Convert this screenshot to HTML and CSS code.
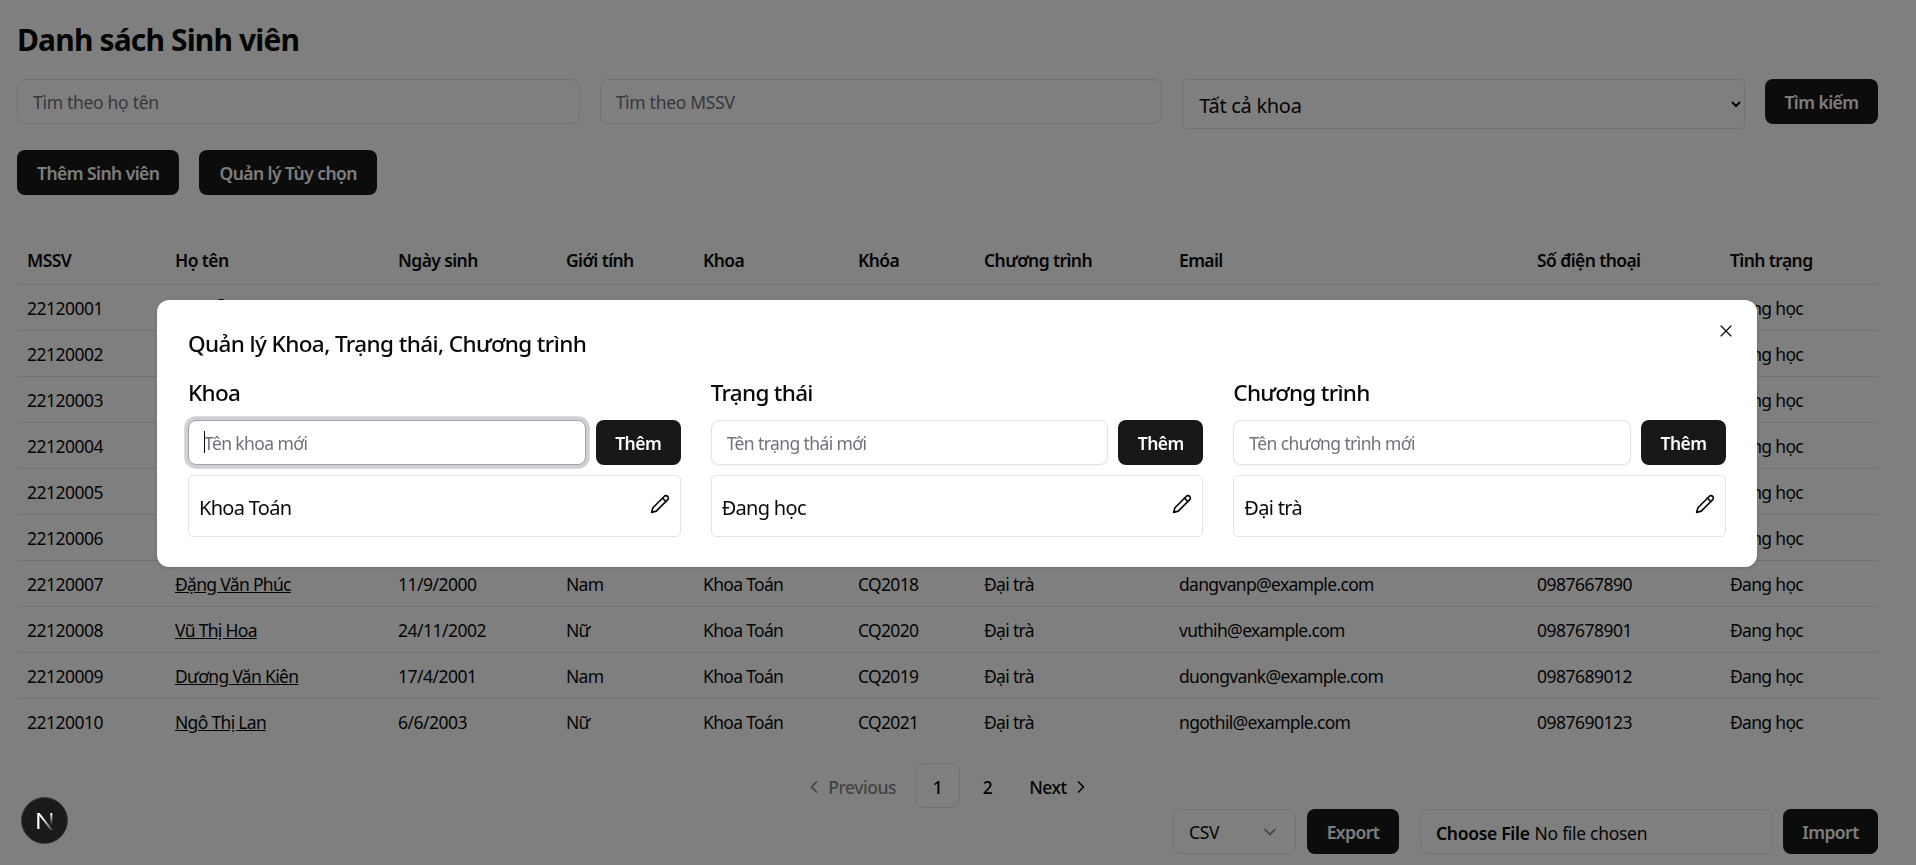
FILE: index.html
```html
<!doctype html>
<html lang="vi">
<head>
    <meta charset="UTF-8">
    <title>Danh sách Sinh viên</title>
    <link rel="stylesheet" href="styles.css">
</head>
<body>
    <div class="page">
        <h1 class="page-title">Danh sách Sinh viên</h1>

        <div class="search-bar">
            <input class="field" type="text" placeholder="Tìm theo họ tên">
            <input class="field" type="text" placeholder="Tìm theo MSSV">
            <select class="field field-select">
                <option>Tất cả khoa</option>
            </select>
            <button class="btn btn-search">Tìm kiếm</button>
        </div>

        <div class="actions">
            <button class="btn">Thêm Sinh viên</button>
            <button class="btn">Quản lý Tùy chọn</button>
        </div>

        <table class="students">
            <colgroup>
                <col class="c-id"><col class="c-name"><col class="c-date"><col class="c-sex"><col class="c-dept">
                <col class="c-year"><col class="c-prog"><col class="c-mail"><col class="c-phone"><col class="c-state">
            </colgroup>
            <thead>
                <tr>
                    <th>MSSV</th><th>Họ tên</th><th>Ngày sinh</th><th>Giới tính</th><th>Khoa</th>
                    <th>Khóa</th><th>Chương trình</th><th>Email</th><th>Số điện thoại</th><th>Tình trạng</th>
                </tr>
            </thead>
            <tbody>
                <!-- rows 1-6 sit behind the dialog -->
                <tr><td>22120001</td><td><a href="#">Nguyễn Văn An</a></td><td></td><td></td><td></td><td></td><td></td><td></td><td></td><td>Đang học</td></tr>
                <tr><td>22120002</td><td></td><td></td><td></td><td></td><td></td><td></td><td></td><td></td><td>Đang học</td></tr>
                <tr><td>22120003</td><td></td><td></td><td></td><td></td><td></td><td></td><td></td><td></td><td>Đang học</td></tr>
                <tr><td>22120004</td><td></td><td></td><td></td><td></td><td></td><td></td><td></td><td></td><td>Đang học</td></tr>
                <tr><td>22120005</td><td></td><td></td><td></td><td></td><td></td><td></td><td></td><td></td><td>Đang học</td></tr>
                <tr><td>22120006</td><td></td><td></td><td></td><td></td><td></td><td></td><td></td><td></td><td>Đang học</td></tr>
                <tr><td>22120007</td><td><a href="#">Đặng Văn Phúc</a></td><td>11/9/2000</td><td>Nam</td><td>Khoa Toán</td><td>CQ2018</td><td>Đại trà</td><td>dangvanp@example.com</td><td>0987667890</td><td>Đang học</td></tr>
                <tr><td>22120008</td><td><a href="#">Vũ Thị Hoa</a></td><td>24/11/2002</td><td>Nữ</td><td>Khoa Toán</td><td>CQ2020</td><td>Đại trà</td><td>vuthih@example.com</td><td>0987678901</td><td>Đang học</td></tr>
                <tr><td>22120009</td><td><a href="#">Dương Văn Kiên</a></td><td>17/4/2001</td><td>Nam</td><td>Khoa Toán</td><td>CQ2019</td><td>Đại trà</td><td>duongvank@example.com</td><td>0987689012</td><td>Đang học</td></tr>
                <tr><td>22120010</td><td><a href="#">Ngô Thị Lan</a></td><td>6/6/2003</td><td>Nữ</td><td>Khoa Toán</td><td>CQ2021</td><td>Đại trà</td><td>ngothil@example.com</td><td>0987690123</td><td>Đang học</td></tr>
            </tbody>
        </table>

        <nav class="pager">
            <a class="pager-link pager-off" href="#">
                <svg class="icon" viewBox="0 0 24 24"><path d="m15 18-6-6 6-6"/></svg>
                Previous
            </a>
            <a class="pager-num pager-on" href="#">1</a>
            <a class="pager-num" href="#">2</a>
            <a class="pager-link" href="#">
                Next
                <svg class="icon" viewBox="0 0 24 24"><path d="m9 18 6-6-6-6"/></svg>
            </a>
        </nav>

        <div class="transfer">
            <div class="format">
                <span>CSV</span>
                <svg class="icon format-arrow" viewBox="0 0 24 24"><path d="m6 9 6 6 6-6"/></svg>
            </div>
            <button class="btn btn-export">Export</button>
            <input class="file" type="file">
            <button class="btn btn-import">Import</button>
        </div>
    </div>

    <div class="overlay">
        <div class="modal">
            <h2 class="modal-title">Quản lý Khoa, Trạng thái, Chương trình</h2>
            <svg class="icon modal-close" viewBox="0 0 24 24"><path d="M18 6 6 18"/><path d="m6 6 12 12"/></svg>
            <div class="modal-grid">
                <section>
                    <h3 class="group-title">Khoa</h3>
                    <div class="add-row">
                        <div class="box-wrap">
                            <input class="box-input" type="text" placeholder="Tên khoa mới" autofocus>
                            <span class="caret"></span>
                        </div>
                        <button class="btn-add">Thêm</button>
                    </div>
                    <div class="item">
                        <span>Khoa Toán</span>
                        <svg class="icon item-edit" viewBox="0 0 24 24"><path d="M17 3a2.85 2.83 0 1 1 4 4L7.5 20.5 2 22l1.5-5.5Z"/><path d="m15 5 4 4"/></svg>
                    </div>
                </section>
                <section>
                    <h3 class="group-title">Trạng thái</h3>
                    <div class="add-row">
                        <div class="box-wrap">
                            <input class="box-input" type="text" placeholder="Tên trạng thái mới">
                        </div>
                        <button class="btn-add">Thêm</button>
                    </div>
                    <div class="item">
                        <span>Đang học</span>
                        <svg class="icon item-edit" viewBox="0 0 24 24"><path d="M17 3a2.85 2.83 0 1 1 4 4L7.5 20.5 2 22l1.5-5.5Z"/><path d="m15 5 4 4"/></svg>
                    </div>
                </section>
                <section>
                    <h3 class="group-title">Chương trình</h3>
                    <div class="add-row">
                        <div class="box-wrap">
                            <input class="box-input" type="text" placeholder="Tên chương trình mới">
                        </div>
                        <button class="btn-add">Thêm</button>
                    </div>
                    <div class="item">
                        <span>Đại trà</span>
                        <svg class="icon item-edit" viewBox="0 0 24 24"><path d="M17 3a2.85 2.83 0 1 1 4 4L7.5 20.5 2 22l1.5-5.5Z"/><path d="m15 5 4 4"/></svg>
                    </div>
                </section>
            </div>
        </div>
    </div>

    <div class="dev-badge">
        <svg viewBox="0 0 24 24" width="32" height="32">
            <defs>
                <linearGradient id="dev-slash" x1="0" y1="0" x2="1" y2="1">
                    <stop offset="0.3" stop-color="#fff"/>
                    <stop offset="1" stop-color="#fff" stop-opacity=".15"/>
                </linearGradient>
                <linearGradient id="dev-bar" x1="0" y1="0" x2="0" y2="1">
                    <stop offset="0" stop-color="#fff"/>
                    <stop offset="1" stop-color="#fff" stop-opacity="0"/>
                </linearGradient>
            </defs>
            <rect class="dev-n" x="6.2" y="6" width="1.6" height="12"/>
            <path fill="url(#dev-slash)" d="M6.2 6h1.8l10 12.8h-2Z"/>
            <rect fill="url(#dev-bar)" x="16" y="6" width="1.5" height="9"/>
        </svg>
    </div>
</body>
</html>
```

FILE: styles.css
```css
*{
    margin: 0;
    padding: 0;
    box-sizing: border-box;
}
html,body{
    height: 100%;
    overflow: hidden;
}
body{
    background: #fff;
    color: #09090b;
    font-family: "Noto Sans", "Open Sans", sans-serif;
    font-size: 17.5px;
    letter-spacing: -0.3px;
}
input,select,button{
    font: inherit;
    letter-spacing: inherit;
    color: inherit;
}
.page{
    padding: 20px 38px 0 17px;
}
.page-title{
    font-size: 30px;
    line-height: 40px;
    font-weight: 700;
    letter-spacing: -0.85px;
    margin-bottom: 19px;
}

.search-bar{
    display: grid;
    grid-template-columns: 1fr 1fr 1fr 113px;
    align-items: start;
    gap: 20px;
}
.field{
    min-width: 0;
    height: 45px;
    padding: 0 15px;
    border: 1px solid #e4e4e7;
    border-radius: 8px;
    background: #fff;
    outline: none;
}
.field::placeholder,.box-input::placeholder{
    color: #71717a;
}
.field-select{
    height: 50px;
    padding: 3px 4px 0 12px;
    font-size: 20px;
    border-radius: 5px;
}
.btn{
    height: 45px;
    padding: 0 20px;
    border: none;
    border-radius: 8px;
    background: #18181b;
    color: #fafafa;
    font-weight: 600;
    letter-spacing: -0.55px;
}
.btn-search{
    padding: 0;
}
.actions{
    display: flex;
    gap: 20px;
    margin-top: 21px;
    margin-bottom: 39px;
}

.students{
    width: 100%;
    table-layout: fixed;
    border-collapse: collapse;
}
.c-id{width: 148px;}
.c-name{width: 223px;}
.c-date{width: 168px;}
.c-sex{width: 137px;}
.c-dept{width: 155px;}
.c-year{width: 126px;}
.c-prog{width: 195px;}
.c-mail{width: 358px;}
.c-phone{width: 193px;}
.students th{
    height: 50px;
    padding: 2px 10px 0;
    text-align: left;
    font-weight: 600;
    letter-spacing: -0.6px;
    border-bottom: 1px solid #e4e4e7;
}
.students td{
    height: 46px;
    padding: 2px 10px 0;
    letter-spacing: -0.68px;
    border-bottom: 1px solid #e4e4e7;
    white-space: nowrap;
}
.students td:nth-child(1),.students td:nth-child(3),.students td:nth-child(9){
    letter-spacing: -0.5px;
}
.students tbody tr:last-child td{
    border-bottom: none;
}
.students a{
    color: inherit;
}

.pager{
    display: flex;
    justify-content: center;
    align-items: center;
    gap: 5px;
    margin-top: 19px;
}
.pager a{
    display: flex;
    align-items: center;
    justify-content: center;
    height: 45px;
    padding-top: 2px;
    color: inherit;
    text-decoration: none;
    font-weight: 500;
    letter-spacing: -0.45px;
}
.pager-link{
    gap: 4px;
    padding: 0 14px;
}
.pager-off{
    opacity: .5;
}
.pager-num{
    width: 45px;
    border: 1px solid transparent;
    border-radius: 8px;
}
.pager-on{
    border-color: #e4e4e7;
}
.icon{
    width: 20px;
    height: 20px;
    fill: none;
    stroke: currentColor;
    stroke-width: 2;
    stroke-linecap: round;
    stroke-linejoin: round;
    flex: none;
}

.transfer{
    display: flex;
    justify-content: flex-end;
    align-items: center;
    height: 45px;
    margin-top: 1px;
}
.format{
    display: flex;
    justify-content: space-between;
    align-items: center;
    width: 123px;
    height: 45px;
    padding: 1px 15px 0;
    border: 1px solid #e4e4e7;
    border-radius: 8px;
}
.format-arrow{
    opacity: .5;
}
.btn-export{
    width: 92px;
    padding: 1px 0 0;
    margin-left: 11px;
}
.file{
    width: 353px;
    height: 45px;
    margin-left: 21px;
    padding: 11px 15px 9px;
    border: 1px solid #e4e4e7;
    border-radius: 8px;
}
.file::file-selector-button{
    border: none;
    background: none;
    font: inherit;
    font-weight: 600;
    letter-spacing: inherit;
    margin-right: 5px;
    padding: 0;
}
.btn-import{
    width: 95px;
    padding: 1px 0 0;
    margin-left: 10px;
}

.overlay{
    position: fixed;
    top: 0;
    left: 0;
    right: 0;
    bottom: 0;
    display: flex;
    align-items: center;
    justify-content: center;
    padding: 2px 2px 0 0;
    background: rgba(0,0,0,.5);
}
.modal{
    position: relative;
    width: 1600px;
    padding: 30px 31px;
    background: #fff;
    border-radius: 12px;
    box-shadow: 0 1px 4px rgba(0,0,0,.15);
}
.modal-title{
    font-size: 22.5px;
    line-height: 28px;
    font-weight: 500;
    letter-spacing: -0.6px;
    margin-bottom: 20px;
}
.modal-close{
    position: absolute;
    top: 21px;
    right: 21px;
    stroke-width: 1.4;
}
.modal-grid{
    display: grid;
    grid-template-columns: repeat(3,1fr);
    gap: 30px;
}
.group-title{
    font-size: 22.5px;
    line-height: 30px;
    font-weight: 500;
    letter-spacing: -0.7px;
    margin-bottom: 12px;
}
.add-row{
    display: flex;
    gap: 10px;
}
.box-wrap{
    position: relative;
    display: flex;
    flex: 1;
    min-width: 0;
}
.box-input{
    flex: 1;
    min-width: 0;
    height: 45px;
    padding: 0 15px;
    border: 1px solid #e4e4e7;
    border-radius: 8px;
    outline: none;
    letter-spacing: -0.6px;
    caret-color: transparent;
    box-shadow: 0 1px 2px rgba(0,0,0,.05);
}
.box-input:focus{
    border-color: #a1a1aa;
    box-shadow: 0 0 0 3.75px #cfcfd6;
}
.caret{
    position: absolute;
    left: 16px;
    top: 11px;
    width: 1px;
    height: 22px;
    background: #09090b;
}
.btn-add{
    width: 85px;
    height: 45px;
    border: none;
    border-radius: 8px;
    background: #18181b;
    color: #fafafa;
    font-weight: 600;
    letter-spacing: -0.55px;
}
.item{
    display: flex;
    justify-content: space-between;
    align-items: center;
    height: 62px;
    margin-top: 10px;
    padding: 0 10px;
    border: 1px solid #e4e4e7;
    border-radius: 5px;
    font-size: 20px;
    letter-spacing: -0.7px;
}
.item span{
    padding-top: 2px;
}
.item-edit{
    margin-bottom: 4px;
}

.dev-badge{
    position: fixed;
    left: 21px;
    top: 797px;
    display: flex;
    align-items: center;
    justify-content: center;
    width: 47px;
    height: 47px;
    border-radius: 50%;
    background: #1a1a1a;
    border: 1.5px solid #3a3a3a;
}
.dev-n{
    fill: #fff;
}
```
